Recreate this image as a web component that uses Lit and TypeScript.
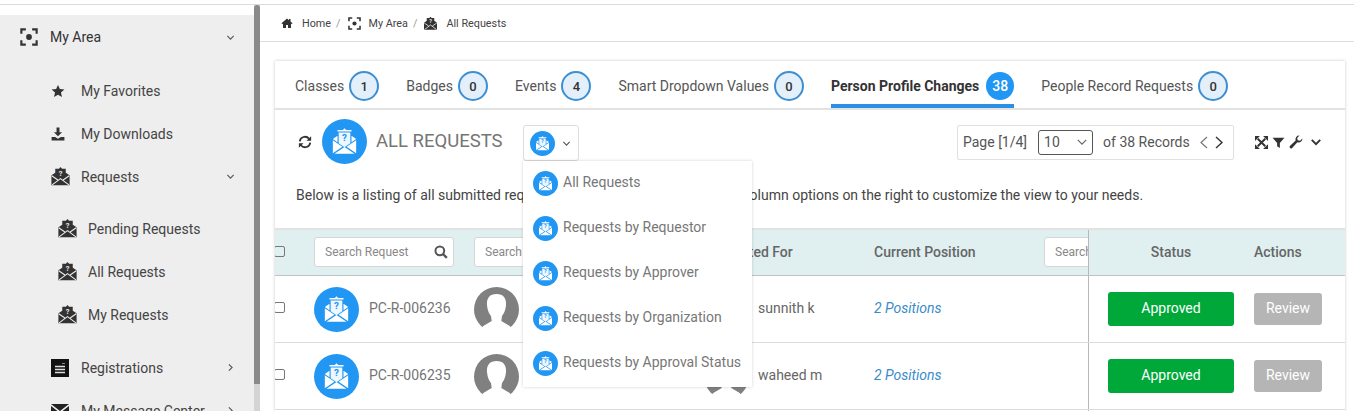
import { LitElement, html, css, svg } from "lit";
import { customElement } from "lit/decorators.js";

const envelope = (fg: string, bg: string) => svg`
  <path fill=${fg} d="M12 1.200 13.800 3H18v4.600L22.400 10.600V22H1.600V10.600L6 7.600V3h4.200Z"/>
  <path fill="none" stroke=${bg} stroke-width="1.200" d="M2 11.200 9 16M22 11.200 15 16M2.400 21.600 12 14.400l9.600 7.200"/>
  <text x="12" y="11.500" text-anchor="middle" font-family="Roboto, sans-serif" font-weight="700" font-size="8.500" fill=${bg}>?</text>
`;

const reqDark = (size = 21, bg = "#eee") => html`<svg class="ic dark" width=${size} height=${size} viewBox="0 0 24 24">${envelope("#333", bg)}</svg>`;

const reqBlue = (size: number) => html`<svg class="ic" width=${size} height=${size} viewBox="0 0 45 45">
  <circle cx="22.500" cy="22.500" r="22.500" fill="#2196f3"/>
  <svg x="8.500" y="8" width="28" height="28" viewBox="0 0 24 24">
    <path fill="#fff" d="M12 1 13.500 2.600H18V7.400L22 10.200 18 13V3.800H6V13L2 10.200 6 7.400V2.600H10.500Z"/>
    <path fill="#fff" d="M7 4.800h10v9.200l-5 3.400-5-3.400Z" opacity=".92"/>
    <path fill="#fff" d="M2 11.400 10.200 17 2 22.400ZM22 11.400 13.800 17 22 22.400ZM3.400 23 12 17.200 20.600 23Z"/>
    <text x="12" y="12" text-anchor="middle" font-family="Roboto, sans-serif" font-weight="700" font-size="8.500" fill="#2196f3">?</text>
  </svg>
</svg>`;

const focusIcon = (size: number, color: string) => html`<svg class="ic" width=${size} height=${size} viewBox="0 0 20 20">
  <path fill="none" stroke=${color} stroke-width="2.400" d="M1.500 6.500V1.500h5M13.500 1.500h5v5M18.500 13.500v5h-5M6.500 18.500h-5v-5"/>
  <circle cx="10" cy="10" r="3.200" fill=${color}/>
</svg>`;

const chevDown = (size = 9, color = "#555", w = 1.2) => html`<svg class="ic" width=${size} height=${size} viewBox="0 0 10 10"><path fill="none" stroke=${color} stroke-width=${w} d="M1.500 3.200 5 6.800 8.500 3.200"/></svg>`;
const chevRight = (size = 9, color = "#555", w = 1.2) => html`<svg class="ic" width=${size} height=${size} viewBox="0 0 10 10"><path fill="none" stroke=${color} stroke-width=${w} d="M3.200 1.500 6.800 5 3.200 8.500"/></svg>`;

const avatar = html`<svg class="ic" width="45" height="45" viewBox="0 0 45 45">
  <circle cx="22.500" cy="22.500" r="22.500" fill="#808080"/>
  <path fill="#fff" d="M22.500 7C15 7 12.500 12 13 18c.5 6 2.500 9 4 11l.7 5-8.400 5L4 46h37l-5.300-7-8.400-5 .7-5c1.500-2 3.500-5 4-11 .5-6-2-11-9.500-11Z"/>
</svg>`;

const searchIcon = html`<svg class="ic" width="14" height="14" viewBox="0 0 24 24"><circle cx="10" cy="10" r="7.500" fill="none" stroke="#555" stroke-width="3.400"/><path stroke="#555" stroke-width="4" d="M15.500 15.500 22 22"/></svg>`;

@customElement("app-root")
export class AppRoot extends LitElement {
  static styles = css`
    :host { display: block; width: 1354px; height: 411px; overflow: hidden; background: #fff; font-family: Roboto, "Liberation Sans", sans-serif; color: #444; font-size: 14px; }
    .ic { display: block; flex: none; }
    .dark { margin: -1px; }
    .page { display: flex; margin-top: 4px; height: 407px; border-top: 1px solid #dcdcdc; box-sizing: border-box; }
    .side { width: 254px; flex: none; margin-top: 10px; background: #eee; overflow: hidden; }
    .scroll { width: 6px; flex: none; background: #d4d4d4; }
    .thumb { background: #8a8a8a; height: 379px; border-radius: 3px 3px 0 0; }
    .nav { display: flex; align-items: center; height: 43px; color: #444; }
    .nav .lead { display: flex; flex: none; }
    .nav .lab { flex: 1; white-space: nowrap; }
    .nav .arrow { width: 10px; margin-right: 19px; flex: none; display: flex; justify-content: center; }
    .n0 { padding-left: 20px; height: 44px; color: #333; }
    .n0 .lead { width: 20px; margin-right: 10px; }
    .n1 { padding-left: 51px; }
    .n1 .lead { width: 19px; margin-right: 11px; }
    .n2 { padding-left: 58px; }
    .n2 .lead { width: 19px; margin-right: 11px; }
    .gap0 { height: 10px; }
    .gap1 { height: 9px; }
    .gap2 { height: 10px; }

    .main { flex: 1; min-width: 0; display: flex; flex-direction: column; }
    .crumbs { height: 37px; flex: none; border-bottom: 1px solid #dedede; display: flex; align-items: center; padding-left: 21px; font-size: 10.800px; color: #444; box-sizing: border-box; }
    .crumbs .txt { margin-left: 9px; }
    .crumbs .sep { color: #999; margin: 0 7px 0 5px; }
    .crumbs .t2 { margin-left: 8px; }
    .card { margin: 19px 9px 0 15px; box-shadow: 0 0 3px rgba(0,0,0,.22); background: #fff; flex: 1; min-height: 0; overflow: hidden; position: relative; }
    .tabs { height: 47px; border-bottom: 2px solid #e2e2e2; display: flex; padding-left: 20px; }
    .tab { display: flex; align-items: center; gap: 5px; margin-right: 27px; color: #555; height: 47px; box-sizing: border-box; padding-top: 3px; }
    .badge { width: 26px; height: 26px; border-radius: 50%; border: 2px solid #3d8fd1; background: #e3f0fb; color: #333; display: flex; align-items: center; justify-content: center; font-size: 13px; font-weight: 500; }
    .tab.active { font-weight: 700; color: #333; border-bottom: 4px solid #2d8fe3; padding-top: 7px; gap: 7px; }
    .tab.active .badge { border: none; background: #2196f3; color: #fff; width: 28px; height: 28px; font-size: 14px; }

    .head { display: flex; align-items: center; height: 64px; padding-left: 23px; position: relative; box-sizing: border-box; }
    .bigicon { margin-bottom: 1px; }
    .title { font-size: 18.500px; color: #757575; margin: 0 0 2px 9px; width: 147px; flex: none; }
    .ddbtn { display: flex; align-items: center; width: 56px; height: 36px; margin-top: 2px; border: 1px solid #ddd; border-radius: 3px; box-sizing: border-box; padding-left: 6px; gap: 7px; flex: none; }
    .refresh { margin: 0 10px 1px 0; }
    .pager { position: absolute; left: 682px; top: 15px; display: flex; align-items: center; height: 35px; width: 277px; border: 1px solid #e0e0e0; border-radius: 2px; box-sizing: border-box; padding: 0 0 1px 5px; color: #555; }
    .sel { width: 55px; height: 25px; border: 1px solid #555; border-radius: 3px; margin: 0 10px 0 11px; box-sizing: border-box; display: flex; align-items: center; justify-content: space-between; padding: 0 4px 0 5px; flex: none; }
    .prev { margin-left: 9px; }
    .next { margin-left: 7px; }
    .tools { position: absolute; left: 980px; top: 25px; display: flex; align-items: center; gap: 4px; }
    .more { margin-left: 3px; }
    .desc { height: 54px; padding: 8px 0 0 21px; line-height: 26px; box-sizing: border-box; white-space: nowrap; }

    .table { position: relative; }
    .row { display: flex; height: 67px; align-items: center; border-bottom: 1px solid #dcdcdc; box-sizing: border-box; position: relative; }
    .row.h { height: 48px; background: #e0f0f0; border-top: 2px solid #e2e2e2; border-bottom: 1px solid #bcc4c4; color: #666; font-weight: 500; padding-bottom: 1px; }
    .cb { width: 9px; height: 9px; border: 1px solid #777; border-radius: 2px; margin: 0 0 3px -1px; flex: none; }
    .h .cb { margin-bottom: 1px; }
    .c1 { margin-left: 29px; width: 160px; flex: none; display: flex; align-items: center; gap: 10px; color: #757575; }
    .c2 { width: 230px; flex: none; }
    .c3 { width: 170px; flex: none; display: flex; align-items: center; gap: 9px; color: #666; white-space: nowrap; }
    .c4 { width: 170px; flex: none; white-space: nowrap; }
    .up { margin-bottom: 2px; }
    .rf { margin-left: -2px; }
    .hd { margin-bottom: 1px; }
    .link { display: block; color: #3a8cc9; font-style: italic; }
    .inp { width: 140px; height: 30px; background: #fff; border: 1px solid #d6d6d6; border-radius: 3px; box-sizing: border-box; display: flex; align-items: center; justify-content: space-between; padding: 0 5px 0 10px; font-size: 12px; color: #888; font-weight: 400; flex: none; overflow: hidden; white-space: nowrap; }
    .inp3 { position: absolute; left: 769px; width: 60px; }
    .fixed { position: absolute; left: 813px; right: 0; top: 0; bottom: 0; border-left: 1px solid #b8b8b8; display: flex; align-items: center; }
    .h .fixed { background: #e0f0f0; padding-bottom: 1px; }
    .row:not(.h) .fixed { background: #fff; }
    .st { width: 126px; margin-left: 19px; flex: none; text-align: center; }
    .ac { margin-left: 20px; }
    .approved { height: 34px; border-radius: 3px; background: #00a83a; color: #fff; display: flex; align-items: center; justify-content: center; padding-bottom: 3px; box-sizing: border-box; }
    .review { width: 68px; height: 32px; border-radius: 3px; background: #b5b5b5; color: #fff; display: flex; align-items: center; justify-content: center; padding-bottom: 3px; box-sizing: border-box; }

    .menu { position: absolute; left: 248px; top: 100px; width: 229px; height: 226px; background: #fff; box-shadow: 0 0 3px rgba(0,0,0,.18); z-index: 3; }
    .mi { display: flex; align-items: center; height: 45px; padding-left: 10px; gap: 5px; color: #777; white-space: nowrap; }
    .mi span { margin-bottom: 3px; }
  `;

  private tab(name: string, n: string, active = false) {
    return html`<div class="tab ${active ? "active" : ""}">${name}<span class="badge">${n}</span></div>`;
  }

  private row(id: string, person: string) {
    return html`<div class="row">
      <div class="cb"></div>
      <div class="c1">${reqBlue(45)}<span class="up">${id}</span></div>
      <div class="c2">${avatar}</div>
      <div class="c3">${avatar}<span class="up">${person}</span></div>
      <div class="c4"><span class="link up">2 Positions</span></div>
      <div class="fixed">
        <div class="st"><div class="approved">Approved</div></div>
        <div class="ac"><div class="review">Review</div></div>
      </div>
    </div>`;
  }

  render() {
    const star = html`<svg class="ic" width="14" height="14" viewBox="0 0 24 24"><path fill="#333" d="M12 1.500l3.200 7.200 7.800.8-5.900 5.200 1.700 7.700L12 18.400l-6.800 4 1.700-7.700L1 9.500l7.800-.8Z"/></svg>`;
    const dl = html`<svg class="ic" width="14" height="14" viewBox="0 0 24 24"><path fill="#333" d="M9.500 1h5v8h4.500l-7 7-7-7h4.500ZM1 17h6l5 3 5-3h6v6H1Z"/></svg>`;
    const reg = html`<svg class="ic" width="18" height="18" viewBox="0 0 18 18"><rect width="18" height="18" fill="#111"/><path stroke="#ddd" stroke-width="1.400" d="M4 7.500h10M4 10.500h10M4 13.500h10"/><path stroke="#888" d="M11 4.500h3"/></svg>`;
    const mail = html`<svg class="ic" width="18" height="18" viewBox="0 0 18 18"><path fill="#222" d="M0 2h18L9 9ZM0 4l9 7 9-7v12H0Z"/></svg>`;
    return html`
      <div class="page">
        <aside class="side">
          <div class="nav n0">
            <span class="lead">${focusIcon(18, "#333")}</span><span class="lab">My Area</span>
            <span class="arrow">${chevDown()}</span>
          </div>
          <div class="gap0"></div>
          <div class="nav n1"><span class="lead">${star}</span><span class="lab">My Favorites</span></div>
          <div class="nav n1"><span class="lead">${dl}</span><span class="lab">My Downloads</span></div>
          <div class="nav n1"><span class="lead">${reqDark()}</span><span class="lab">Requests</span><span class="arrow">${chevDown()}</span></div>
          <div class="gap1"></div>
          <div class="nav n2"><span class="lead">${reqDark()}</span><span class="lab">Pending Requests</span></div>
          <div class="nav n2"><span class="lead">${reqDark()}</span><span class="lab">All Requests</span></div>
          <div class="nav n2"><span class="lead">${reqDark()}</span><span class="lab">My Requests</span></div>
          <div class="gap2"></div>
          <div class="nav n1"><span class="lead">${reg}</span><span class="lab">Registrations</span><span class="arrow">${chevRight()}</span></div>
          <div class="nav n1"><span class="lead">${mail}</span><span class="lab">My Message Center</span><span class="arrow">${chevRight()}</span></div>
        </aside>
        <div class="scroll"><div class="thumb"></div></div>
        <main class="main">
          <div class="crumbs">
            <svg class="ic" width="12" height="12" viewBox="0 0 24 24"><path fill="#333" d="M12 3 1 12.500l1.600 1.800L4 13v9h6v-6h4v6h6v-9l1.400 1.300 1.600-1.800L19 9V4h-3v2.400Z"/></svg>
            <span class="txt">Home</span><span class="sep">/</span>
            ${focusIcon(13, "#333")}<span class="txt t2">My Area</span><span class="sep">/</span>
            ${reqDark(15, "#fff")}<span class="txt">All Requests</span>
          </div>
          <section class="card">
            <nav class="tabs">
              ${this.tab("Classes", "1")}${this.tab("Badges", "0")}${this.tab("Events", "4")}
              ${this.tab("Smart Dropdown Values", "0")}${this.tab("Person Profile Changes", "38", true)}
              ${this.tab("People Record Requests", "0")}
            </nav>
            <div class="head">
              <svg class="ic refresh" width="14" height="14" viewBox="0 0 24 24"><path fill="none" stroke="#333" stroke-width="3" d="M3 11a9 9 0 0 1 16-4.500M21 13a9 9 0 0 1-16 4.500"/><path fill="#333" d="M22.500 2v8h-8ZM1.500 22v-8h8Z"/></svg>
              <span class="bigicon">${reqBlue(45)}</span>
              <div class="title">ALL REQUESTS</div>
              <div class="ddbtn">${reqBlue(25)}${chevDown()}</div>
              <div class="pager">
                <span>Page [1/4]</span>
                <div class="sel"><span>10</span>${chevDown(12, "#666", 1)}</div>
                <span>of 38 Records</span>
                <svg class="ic prev" width="9" height="13" viewBox="0 0 9 13"><path fill="none" stroke="#777" stroke-width="1.200" d="M8 1 2 6.500 8 12"/></svg>
                <svg class="ic next" width="9" height="13" viewBox="0 0 9 13"><path fill="none" stroke="#333" stroke-width="1.400" d="M1 1 7 6.500 1 12"/></svg>
              </div>
              <div class="tools">
                <svg class="ic" width="13" height="13" viewBox="0 0 24 24"><path fill="none" stroke="#333" stroke-width="3.600" d="M5 5l14 14M19 5 5 19"/><path fill="#333" d="M0 0h9L0 9ZM24 0v9L15 0ZM0 24v-9l9 9ZM24 24h-9l9-9Z"/></svg>
                <svg class="ic" width="13" height="13" viewBox="0 0 24 24"><path fill="#333" d="M1 3h22l-8.500 10v9l-5-3v-6Z"/></svg>
                <svg class="ic" width="14" height="14" viewBox="0 0 24 24"><path fill="#333" d="M23 6.500a6.500 6.500 0 0 1-8.600 6.100L5 22.500a2.500 2.500 0 0 1-3.500-3.500l9.900-9.400A6.500 6.500 0 0 1 18 1l-4 4 1 4 4 1 4-4Z"/></svg>
                <span class="more">${chevDown(12, "#333", 1.600)}</span>
              </div>
            </div>
            <div class="desc">Below is a listing of all submitted requests. Use the search tabs and the column options on the right to customize the view to your needs.</div>
            <div class="table">
              <div class="row h">
                <div class="cb"></div>
                <div class="c1"><div class="inp"><span>Search Request</span>${searchIcon}</div></div>
                <div class="c2"><div class="inp"><span>Search Person</span></div></div>
                <div class="c3"><span class="rf hd">Requested For</span></div>
                <div class="c4"><div class="hd">Current Position</div></div>
                <div class="inp inp3"><span>Search</span></div>
                <div class="fixed">
                  <div class="st hd">Status</div>
                  <div class="ac hd">Actions</div>
                </div>
              </div>
              ${this.row("PC-R-006236", "sunnith k")}
              ${this.row("PC-R-006235", "waheed m")}
              <div class="row"><div class="fixed"></div></div>
            </div>
            <div class="menu">
              ${["All Requests", "Requests by Requestor", "Requests by Approver", "Requests by Organization", "Requests by Approval Status"].map(
                (m) => html`<div class="mi">${reqBlue(25)}<span>${m}</span></div>`
              )}
            </div>
          </section>
        </main>
      </div>
    `;
  }
}
